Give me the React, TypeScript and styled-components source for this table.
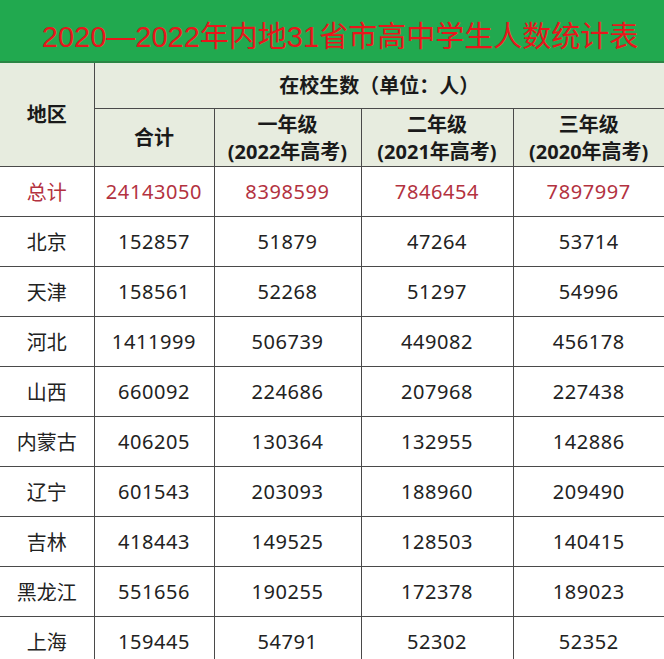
import React from "react";
import styled, { createGlobalStyle } from "styled-components";

const Global = createGlobalStyle`
  html, body { margin: 0; padding: 0; background: #ffffff; }
  body { font-family: "Noto Sans", "Noto Sans CJK SC", sans-serif; }
`;

const Page = styled.div`
  width: 664px;
  height: 659px;
  overflow: hidden;
  background: #ffffff;
`;

const TitleBar = styled.div`
  height: 55px;
  background: #21a94f;
  border-bottom: 2px solid #2a8544;
  display: flex;
  align-items: center;
  justify-content: center;
  padding-left: 16px;
  padding-top: 6px;
  box-sizing: content-box;
`;

const Title = styled.h1`
  margin: 0;
  font-family: "Liberation Sans", "Noto Sans CJK SC", sans-serif;
  font-weight: 400;
  font-size: 29px;
  color: #e8161c;
  white-space: nowrap;
`;

const Table = styled.table`
  width: 664px;
  border-collapse: collapse;
  table-layout: fixed;
`;

const HeadCell = styled.th<{ $h?: number }>`
  background: #e7ecdf;
  color: #1a1a1a;
  font-family: "Noto Sans", "Noto Sans CJK SC", sans-serif;
  font-weight: 700;
  font-size: 20px;
  line-height: 27px;
  text-align: center;
  vertical-align: middle;
  padding: 0;
  height: ${(p) => p.$h ?? 45}px;
  border: 1.5px solid #4a4a4a;
  border-top: none;
  &:first-child { border-left: none; }
  &:last-child { border-right: none; }
`;

const Cell = styled.td<{ $red?: boolean }>`
  height: 49px;
  padding: 0;
  text-align: center;
  vertical-align: middle;
  font-family: "Noto Sans", "Noto Sans CJK SC", sans-serif;
  font-size: 20px;
  letter-spacing: 0.6px;
  color: ${(p) => (p.$red ? "#b3323f" : "#222222")};
  border: 1.5px solid #4a4a4a;
  &:first-child { border-left: none; letter-spacing: 0; }
  &:last-child { border-right: none; }
`;

const rows: [string, string, string, string, string][] = [
  ["总计", "24143050", "8398599", "7846454", "7897997"],
  ["北京", "152857", "51879", "47264", "53714"],
  ["天津", "158561", "52268", "51297", "54996"],
  ["河北", "1411999", "506739", "449082", "456178"],
  ["山西", "660092", "224686", "207968", "227438"],
  ["内蒙古", "406205", "130364", "132955", "142886"],
  ["辽宁", "601543", "203093", "188960", "209490"],
  ["吉林", "418443", "149525", "128503", "140415"],
  ["黑龙江", "551656", "190255", "172378", "189023"],
  ["上海", "159445", "54791", "52302", "52352"],
];

export default function App() {
  return (
    <Page>
      <Global />
      <TitleBar>
        <Title>2020—2022年内地31省市高中学生人数统计表</Title>
      </TitleBar>
      <Table>
        <colgroup>
          <col style={{ width: 94 }} />
          <col style={{ width: 120 }} />
          <col style={{ width: 147 }} />
          <col style={{ width: 152 }} />
          <col style={{ width: 151 }} />
        </colgroup>
        <thead>
          <tr>
            <HeadCell rowSpan={2}>地区</HeadCell>
            <HeadCell colSpan={4} $h={45}>在校生数（单位：人）</HeadCell>
          </tr>
          <tr>
            <HeadCell $h={57}>合计</HeadCell>
            <HeadCell $h={57}>一年级<br />(2022年高考)</HeadCell>
            <HeadCell $h={57}>二年级<br />(2021年高考)</HeadCell>
            <HeadCell $h={57}>三年级<br />(2020年高考)</HeadCell>
          </tr>
        </thead>
        <tbody>
          {rows.map((r, i) => (
            <tr key={r[0]}>
              {r.map((v, j) => (
                <Cell key={j} $red={i === 0}>{v}</Cell>
              ))}
            </tr>
          ))}
        </tbody>
      </Table>
    </Page>
  );
}
